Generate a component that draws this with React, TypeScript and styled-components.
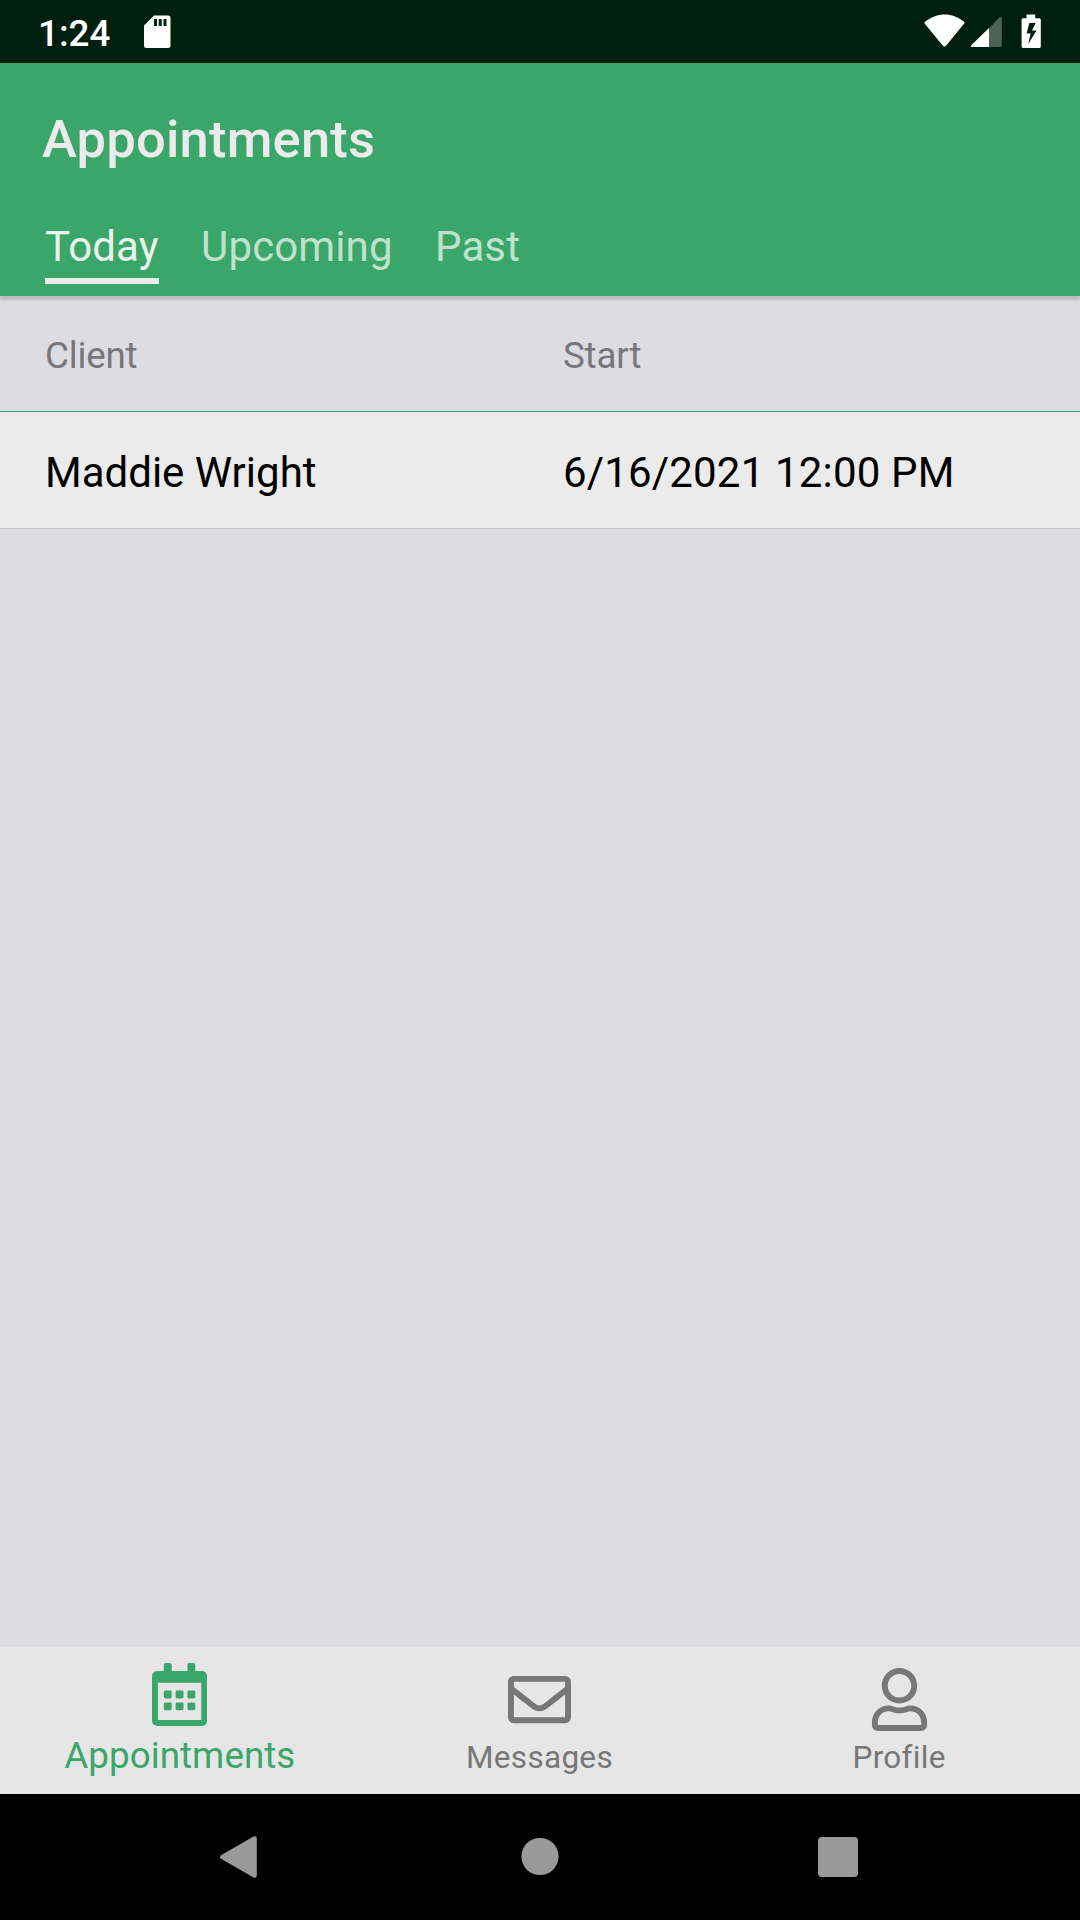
import React from "react";
import styled, { createGlobalStyle } from "styled-components";
import { FaRegEnvelope, FaRegUser } from "react-icons/fa";

const GlobalStyle = createGlobalStyle`
  *, *::before, *::after { box-sizing: border-box; }
  body { margin: 0; background: #dddce1; }
`;

const Screen = styled.div`
  display: flex;
  flex-direction: column;
  width: 1080px;
  height: 1920px;
  overflow: hidden;
  background: #dddce1;
  font-family: Roboto, "Noto Sans", sans-serif;
  font-size: 42px;
  color: #000;
`;

const StatusBar = styled.div`
  display: flex;
  align-items: center;
  height: 63px;
  padding: 0 38px;
  background: #00200f;
  color: #fff;
`;

const Clock = styled.span`
  width: 106px;
  margin-top: 5px;
  font-size: 36.75px;
  font-weight: 500;
  line-height: 44px;
`;

const StatusIcons = styled.div`
  display: flex;
  margin-left: auto;
`;

const Header = styled.header`
  display: flex;
  flex-direction: column;
  height: 233px;
  padding: 46px 42px 0;
  background: #3aa669;
  box-shadow: 0 4px 2px rgba(60, 50, 80, 0.18);
  z-index: 1;
`;

const Title = styled.h1`
  margin: 0;
  font-size: 52.5px;
  font-weight: 500;
  line-height: 60px;
  letter-spacing: 0.2px;
  color: #ebebeb;
`;

const Tabs = styled.nav`
  display: flex;
  gap: 42.4px;
  margin-top: 53px;
  padding-left: 3px;
`;

const Tab = styled.a<{ $active?: boolean }>`
  height: 62px;
  line-height: 50px;
  letter-spacing: 0.12px;
  color: ${(p) => (p.$active ? "#ebf3ec" : "#bfe2cc")};
  border-bottom: 6px solid ${(p) => (p.$active ? "#ebebeb" : "transparent")};
`;

const TableRow = styled.div<{ $head?: boolean }>`
  display: grid;
  grid-template-columns: 518px 1fr;
  align-items: center;
  height: ${(p) => (p.$head ? 116 : 117)}px;
  padding: ${(p) => (p.$head ? 4 : 5)}px 45px 0;
  font-size: ${(p) => (p.$head ? 36.75 : 42)}px;
  letter-spacing: ${(p) => (p.$head ? -0.2 : 0)}px;
  color: ${(p) => (p.$head ? "#77777a" : "#000")};
  background: ${(p) => (p.$head ? "transparent" : "#ebebeb")};
  border-bottom: 1px solid ${(p) => (p.$head ? "#3f9f74" : "#c1c0c8")};
`;

const StartTime = styled.span`
  letter-spacing: 0.17px;
`;

const Content = styled.main`
  flex: 1;
`;

const BottomBar = styled.nav`
  display: grid;
  grid-template-columns: repeat(3, 1fr);
  height: 147px;
  padding-right: 1px;
  background: #e6e6e6;
`;

const BottomItem = styled.a<{ $active?: boolean }>`
  display: flex;
  flex-direction: column;
  align-items: center;
  padding-top: ${(p) => (p.$active ? 16 : 21)}px;
  font-size: ${(p) => (p.$active ? 36.75 : 31.5)}px;
  line-height: 44px;
  letter-spacing: ${(p) => (p.$active ? 0.05 : 0.3)}px;
  color: ${(p) => (p.$active ? "#3aa669" : "#777")};
`;

const BottomLabel = styled.span<{ $gap: number }>`
  margin-top: ${(p) => p.$gap}px;
`;

const NavBar = styled.div`
  display: flex;
  align-items: center;
  justify-content: space-between;
  height: 126px;
  padding: 0 222px 0 220px;
  background: #000;
`;

const HomeIcon = styled.svg`
  margin-left: 4px;
`;

function CalendarIcon() {
  return (
    <svg width="55.125" height="63" viewBox="0 0 448 512" fill="currentColor">
      <path
        fillRule="evenodd"
        d="M112 0h32q16 0 16 16v48h128V16q0-16 16-16h32q16 0 16 16v48h48q48 0 48 48v352q0 48-48 48H48q-48 0-48-48V112q0-48 48-48h48V16q0-16 16-16zM48 160v298q0 6 6 6h340q6 0 6-6V160z"
      />
      {[96, 192, 288].map((x) =>
        [224, 320].map((y) => <rect key={`${x}-${y}`} x={x} y={y} width="64" height="64" rx="12" />)
      )}
    </svg>
  );
}

export default function App() {
  return (
    <>
      <GlobalStyle />
      <Screen>
        <StatusBar>
          <Clock>1:24</Clock>
          <svg width="27" height="34" viewBox="0 0 27 34">
            <path
              fill="#fff"
              fillRule="evenodd"
              d="M10 0.5H24Q26.5 0.5 26.5 3V30.5Q26.5 33 24 33H2.5Q0 33 0 30.5V10.5ZM10 4v7h3V4zM14.7 4v7h3V4zM19.5 4v7h3V4z"
            />
          </svg>
          <StatusIcons>
            <svg width="118" height="36" viewBox="0 0 118 36" fill="#fff">
              <path d="M0.8 8C13 -2 28.5 -2 40.2 8Q40.8 8.7 40.2 9.5L22.3 31.5Q20.5 33.3 18.7 31.5L0.6 9.5Q0.2 8.7 0.8 8Z" />
              <path fill="#4d6357" d="M65 14.5L75.3 3.5Q77.8 1.5 77.8 4.3V31.500Q77.800 33 76 33H65Z" />
              <path d="M65 14V33H48.500Q46 33 47.500 31Z" />
              <path
                fillRule="evenodd"
                d="M102.500 0.500h8.700v3.700h4q1.600 0 1.600 1.600V32.400q0 1.600-1.600 1.600H99.200q-1.600 0-1.600-1.600V5.800q0-1.600 1.600-1.600h3.300zM105.300 9l-2.700 10.500h4l-2.300 10.500 8.200-13.500h-4.500L111.700 9z"
              />
            </svg>
          </StatusIcons>
        </StatusBar>
        <Header>
          <Title>Appointments</Title>
          <Tabs>
            <Tab $active>Today</Tab>
            <Tab>Upcoming</Tab>
            <Tab>Past</Tab>
          </Tabs>
        </Header>
        <TableRow $head>
          <span>Client</span>
          <span>Start</span>
        </TableRow>
        <TableRow>
          <span>Maddie Wright</span>
          <StartTime>6/16/2021 12:00 PM</StartTime>
        </TableRow>
        <Content />
        <BottomBar>
          <BottomItem $active>
            <CalendarIcon />
            <BottomLabel $gap={8}>Appointments</BottomLabel>
          </BottomItem>
          <BottomItem>
            <FaRegEnvelope size={63} />
            <BottomLabel $gap={5}>Messages</BottomLabel>
          </BottomItem>
          <BottomItem>
            <FaRegUser size={63} />
            <BottomLabel $gap={5}>Profile</BottomLabel>
          </BottomItem>
        </BottomBar>
        <NavBar>
          <svg width="37" height="42" viewBox="0 0 37 42" fill="#999">
            <path d="M1 19.200L33.500 0.500Q36.800-0.800 36.800 2.500V39.500Q36.800 42.800 33.500 41.500L1 22.800Q-1 21 1 19.200Z" />
          </svg>
          <HomeIcon width="38" height="38" viewBox="0 0 38 38" fill="#999">
            <circle cx="19" cy="18.500" r="18.600" />
          </HomeIcon>
          <svg width="40" height="40" viewBox="0 0 40 40" fill="#999">
            <rect width="40" height="40" rx="4" />
          </svg>
        </NavBar>
      </Screen>
    </>
  );
}
